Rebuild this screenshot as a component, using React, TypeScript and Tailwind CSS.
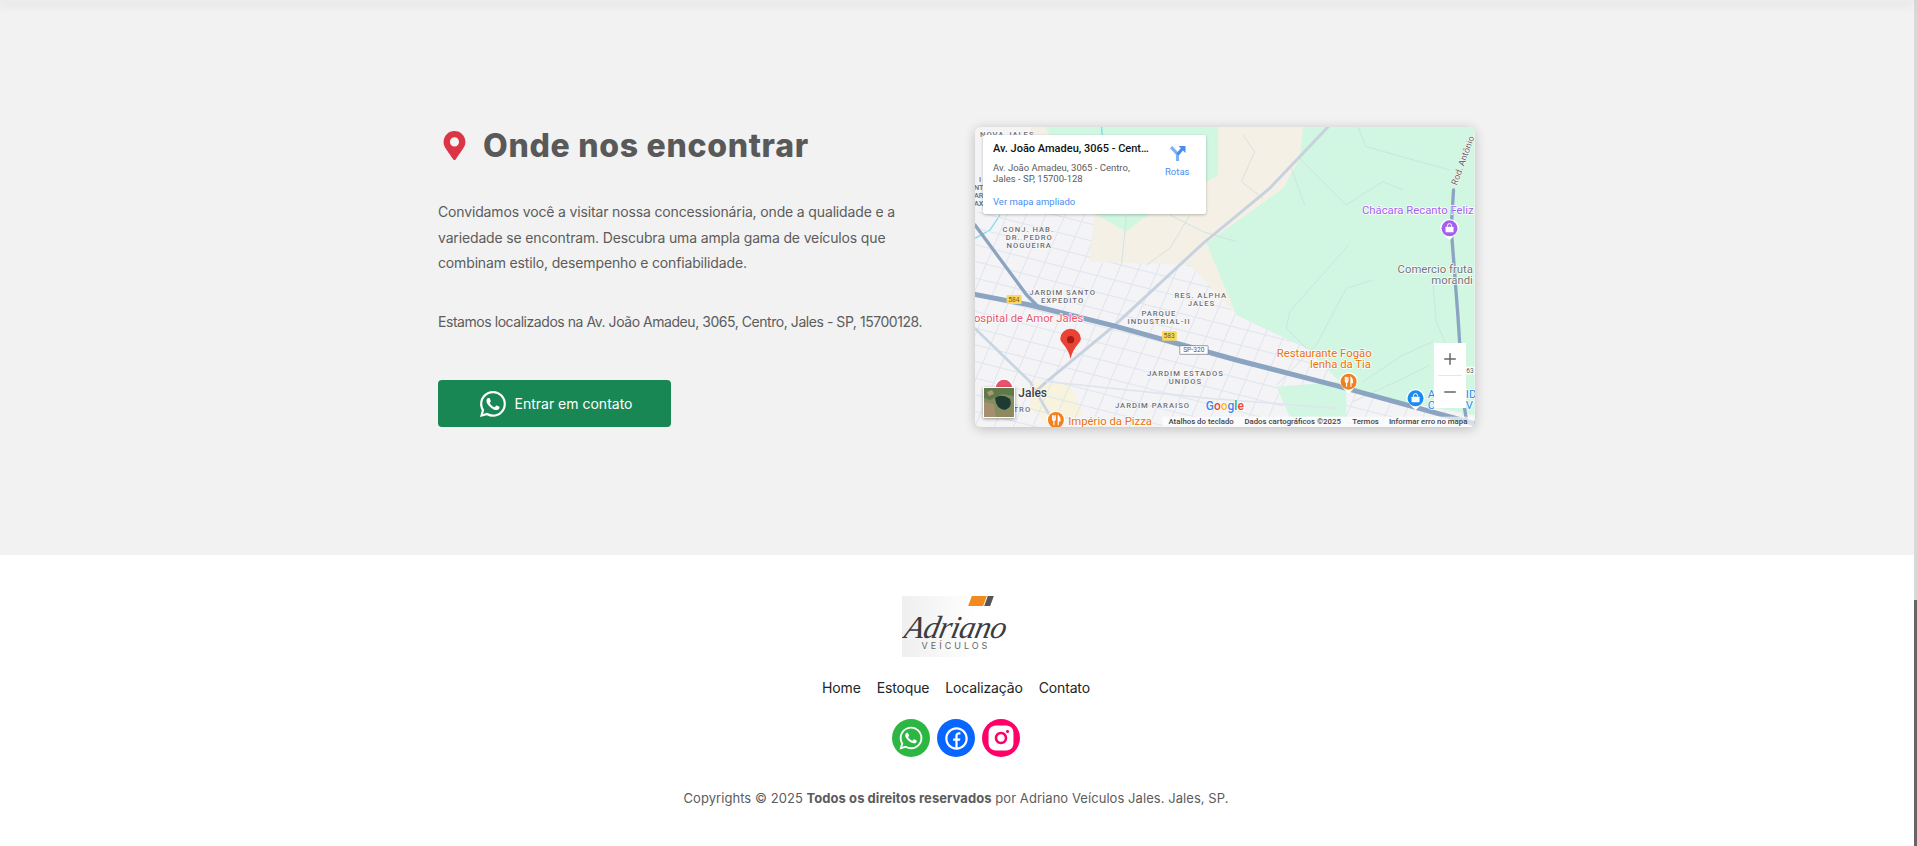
import React from "react";
import { FaMapMarkerAlt, FaWhatsapp } from "react-icons/fa";
import { BsWhatsapp } from "react-icons/bs";
import { RiFacebookCircleLine, RiInstagramFill } from "react-icons/ri";
import { Plus, Minus } from "lucide-react";

const navLinks = ["Home", "Estoque", "Localização", "Contato"];

// neighbourhood labels on the map: [text, x, y]
const areaLabels: [string, number, number][] = [
  ["NOVA JALES", 112, 66],
  ["CONJ. HAB.", 175, 352],
  ["DR. PEDRO", 178, 376],
  ["NOGUEIRA", 178, 400],
  ["JARDIM SANTO", 278, 539],
  ["EXPEDITO", 278, 563],
  ["RES. ALPHA", 693, 549],
  ["JALES", 695, 573],
  ["PARQUE", 567, 604],
  ["INDUSTRIAL-II", 568, 628],
  ["JARDIM ESTADOS", 647, 782],
  ["UNIDOS", 647, 806],
  ["JARDIM PARAISO", 548, 880],
];

// thin roads over green and beige land
const thinRoads = [
  "M820 60 L855 110 L815 200 L880 250",
  "M1165 36 L1190 95 L1440 165",
  "M990 130 L1130 270 L1240 200 L1300 225",
  "M965 160 L1005 270",
  "M1135 392 L960 590 L950 640 L1010 700",
  "M1210 495 L1130 520 L1040 690 L920 810",
  "M1390 500 L1400 620 L1430 690",
  "M1180 800 L1300 720 L1390 680",
  "M1150 860 L1280 800 L1380 750",
  "M600 300 L700 350 L800 380",
  "M470 300 L455 450",
  "M660 300 L600 400 L530 450",
];

function PoiPin({ x, y, color, children }: { x: number; y: number; color: string; children?: React.ReactNode }) {
  return (
    <g transform={`translate(${x} ${y})`}>
      <path d="M-28 0 A28 28 0 1 1 28 0 Q24 14 0 36 Q-24 14 -28 0 Z" fill="#fff" />
      <circle r="24" fill={color} />
      {children}
    </g>
  );
}

function ForkKnife() {
  return (
    <g stroke="#fff" strokeWidth="3.5" fill="none" strokeLinecap="round">
      <path d="M-10 -13 V-3 Q-10 2 -6 2 Q-2 2 -2 -3 V-13 M-6 -13 V14" />
      <path d="M7 14 V-13 Q13 -8 12 3 H7" fill="#fff" />
    </g>
  );
}

function LockBag() {
  return (
    <g>
      <rect x="-12" y="-5" width="24" height="17" rx="2" fill="#fff" />
      <path d="M-6 -5 V-9 Q-6 -14 0 -14 Q6 -14 6 -9 V-5" stroke="#fff" strokeWidth="3" fill="none" />
    </g>
  );
}

function MapDrawing() {
  return (
    <svg viewBox="15 36 1500 900" preserveAspectRatio="none" className="block w-full h-full font-['Roboto',sans-serif]">
      <defs>
        <clipPath id="urban">
          <path d="M15 290 H372 L360 440 L660 450 L800 600 L1010 700 L1110 800 L920 815 L960 936 H15 Z" />
          <path d="M1130 830 L1300 860 L1513 900 V936 H1130 Z" />
        </clipPath>
      </defs>

      <rect x="15" y="36" width="1500" height="900" fill="#f4f3f6" />
      {/* land */}
      <path d="M180 36 H1000 L990 130 L940 220 L710 385 L800 600 L660 450 L360 440 L372 290 L180 200 Z" fill="#f4f0e5" />
      <path d="M228 36 H745 V180 L520 310 L470 350 L372 295 L300 200 Z" fill="#d1f6e1" />
      <path d="M1000 36 H1515 V936 H1130 L1110 800 L1010 700 L800 600 L710 385 L940 220 L990 130 Z" fill="#d1f6e1" />
      <path d="M920 815 L1110 800 L1150 905 L960 905 Z" fill="#d1f6e1" />
      <path d="M1130 830 L1300 860 L1513 900 V936 H1130 Z" fill="#f4f3f6" />
      <path d="M190 800 L300 810 L340 900 L230 925 L180 880 Z" fill="#f8f3dd" />
      <path d="M395 36 L397 60" stroke="#7fdcec" strokeWidth="4" fill="none" />
      <path d="M15 370 L60 345 L90 300" stroke="#7fdcec" strokeWidth="4" fill="none" />

      {thinRoads.map((d) => (
        <path key={d} d={d} stroke="#cfdfe2" strokeWidth="2.5" fill="none" />
      ))}

      {/* street grid */}
      <g clipPath="url(#urban)" stroke="#dfe5ee" strokeWidth="3">
        {Array.from({ length: 20 }).map((_, i) => (
          <line key={`a${i}`} x1="-100" y1={210 + i * 50} x2="1600" y2={640 + i * 50} />
        ))}
        {Array.from({ length: 30 }).map((_, i) => (
          <line key={`b${i}`} x1={-160 + i * 58} y1="936" x2={120 + i * 58} y2="280" />
        ))}
      </g>

      {/* roads */}
      <g fill="none" strokeLinejoin="round" strokeLinecap="round">
        <path d="M1075 36 L900 220 L700 385 L430 635 L230 800 L180 845" stroke="#c8d2df" strokeWidth="9" />
        <path d="M15 640 L180 800 L260 936" stroke="#c8d5e2" strokeWidth="8" />
        <path d="M230 800 L720 850 L1100 880" stroke="#dfe5ee" strokeWidth="5" />
        <path d="M15 330 L170 540 L210 580" stroke="#8aa4c1" strokeWidth="10" />
        <path d="M15 538 L180 570 L430 632 L800 735 L1100 812 L1513 925" stroke="#8aa4c1" strokeWidth="15" />
        <path d="M1452 225 L1445 340 L1465 600 L1482 860 L1490 910" stroke="#8aa4c1" strokeWidth="10" />
      </g>

      {/* shields */}
      <rect x="110" y="540" width="45" height="27" rx="3" fill="#fbd75b" />
      <text x="132" y="560" fontSize="20" fill="#6d5f2a" textAnchor="middle">584</text>
      <rect x="577" y="649" width="44" height="28" rx="3" fill="#fbd75b" />
      <text x="598" y="670" fontSize="20" fill="#6d5f2a" textAnchor="middle">583</text>
      <rect x="630" y="692" width="85" height="26" rx="2" fill="#fff" stroke="#6b6f76" strokeWidth="2" />
      <text x="672" y="711" fontSize="20" fill="#55595f" textAnchor="middle">SP-320</text>
      <rect x="1488" y="755" width="27" height="23" fill="#fff" />
      <text x="1490" y="773" fontSize="20" fill="#55595f">63</text>

      {/* labels */}
      <g fontSize="23" fontWeight="500" letterSpacing="3" fill="#696d74" textAnchor="middle" stroke="#fff" strokeWidth="3" paintOrder="stroke">
        {areaLabels.map(([label, x, y]) => (
          <text key={label + y} x={x} y={y}>{label}</text>
        ))}
        <text x="157" y="890">TRO</text>
      </g>
      <g fontSize="22" fill="#696d74" fontWeight="500">
        <text x="30" y="202" textAnchor="middle">I</text>
        <text x="26" y="226" textAnchor="middle">NT</text>
        <text x="26" y="250" textAnchor="middle">AR</text>
        <text x="26" y="274" textAnchor="middle">AX</text>
      </g>
      <g fontSize="34" stroke="#fff" strokeWidth="4" paintOrder="stroke">
        <text x="340" y="620" textAnchor="end" fill="#e8546c">Hospital de Amor Jales</text>
        <text x="1206" y="726" textAnchor="end" fill="#e8710a">Restaurante Fogão</text>
        <text x="1204" y="760" textAnchor="end" fill="#e8710a">lenha da Tia</text>
        <text x="295" y="930" fill="#e8710a">Império da Pizza</text>
        <text x="1177" y="298" fill="#a55ff0">Chácara Recanto Feliz</text>
        <text x="1510" y="474" textAnchor="end" fill="#70757a">Comercio fruta</text>
        <text x="1510" y="507" textAnchor="end" fill="#70757a">morandi</text>
        <text x="1375" y="848" fill="#1a8cf0">A</text>
        <text x="1489" y="848" fill="#1a8cf0">ID</text>
        <text x="1375" y="882" fill="#1a8cf0">C</text>
        <text x="1489" y="882" fill="#1a8cf0">V</text>
      </g>
      <text x="145" y="846" fontSize="36" fontWeight="500" fill="#3c4043" stroke="#fff" strokeWidth="4" paintOrder="stroke">Jales</text>
      <text transform="translate(1462 212) rotate(-70)" fontSize="27" fill="#5f6368" stroke="#fff" strokeWidth="3" paintOrder="stroke">Rod. Antônio</text>

      {/* points of interest */}
      <PoiPin x={1440} y={340} color="#a55ff0"><LockBag /></PoiPin>
      <PoiPin x={1137} y={800} color="#f2801c"><ForkKnife /></PoiPin>
      <PoiPin x={258} y={915} color="#f2801c"><ForkKnife /></PoiPin>
      <PoiPin x={1338} y={850} color="#1a8cf0"><LockBag /></PoiPin>
      <PoiPin x={102} y={818} color="#e8546c" />

      {/* marker */}
      <path d="M302 732 Q296 705 280 688 Q271 678 271 672 A31 31 0 1 1 333 672 Q333 678 324 688 Q308 705 302 732 Z" fill="#ea4335" />
      <circle cx="302" cy="674" r="11" fill="#a61b14" />

      {/* google logo */}
      <text x="708" y="885" fontSize="36" fontWeight="500" stroke="#fff" strokeWidth="3" paintOrder="stroke">
        <tspan fill="#4285f4">G</tspan>
        <tspan fill="#ea4335">o</tspan>
        <tspan fill="#fbbc05">o</tspan>
        <tspan fill="#4285f4">g</tspan>
        <tspan fill="#34a853">l</tspan>
        <tspan fill="#ea4335">e</tspan>
      </text>

      {/* attribution */}
      <rect x="578" y="905" width="937" height="31" fill="#fff" fillOpacity="0.65" />
      <g fontSize="23.5" fontWeight="500" fill="#444">
        <text x="596" y="927">Atalhos do teclado</text>
        <text x="824" y="927">Dados cartográficos ©2025</text>
        <text x="1148" y="927">Termos</text>
        <text x="1258" y="927">Informar erro no mapa</text>
      </g>
    </svg>
  );
}

function MapEmbed() {
  return (
    <div className="relative w-[499.5px] h-[300px] rounded-md overflow-hidden shadow-[0_2px_12px_rgba(0,0,0,0.22)] font-['Roboto',sans-serif]">
      <MapDrawing />

      {/* place card */}
      <div className="absolute left-2 top-2 w-[223px] h-[79px] bg-white rounded-[2px] shadow-[0_1px_3px_rgba(0,0,0,0.25)] flex pl-[10px] pt-[7px]">
        <div className="w-[160px]">
          <div className="w-[158px] text-[11px] leading-[14px] font-medium text-[#111] truncate">
            Av. João Amadeu, 3065 - Centro, Jales
          </div>
          <div className="mt-[6px] text-[9.5px] leading-[11px] text-[#5b5b5b]">
            Av. João Amadeu, 3065 - Centro,
            <br />
            Jales - SP, 15700-128
          </div>
          <div className="mt-[12px] text-[9.5px] leading-[11px] text-[#4a8df0]">Ver mapa ampliado</div>
        </div>
        <div className="ml-[12px] flex flex-col items-center pt-[3px]">
          <svg viewBox="0 0 16 16" className="w-[17px] h-[17px]">
            <path d="M2 2 L8 8.5 V15" stroke="#7fb0f5" strokeWidth="3" fill="none" />
            <path d="M8 9 L13 3" stroke="#4a8df0" strokeWidth="3" fill="none" />
            <path d="M9 1 H15.5 V7.5 Z" fill="#4a8df0" />
          </svg>
          <div className="mt-[4px] text-[9.5px] leading-[11px] text-[#4a8df0]">Rotas</div>
        </div>
      </div>

      {/* zoom buttons */}
      <div className="absolute left-[459px] top-[216px] w-8 h-[65px] bg-white flex flex-col items-center text-[#666]">
        <div className="h-8 flex items-center justify-center">
          <Plus size={18} strokeWidth={2} />
        </div>
        <div className="w-6 h-px bg-[#e6e6e6]" />
        <div className="h-8 flex items-center justify-center">
          <Minus size={18} strokeWidth={2} />
        </div>
      </div>

      {/* satellite thumbnail */}
      <div className="absolute left-2 top-[260px] w-[32px] h-[31px] border border-white shadow-[0_1px_3px_rgba(0,0,0,0.4)]">
        <svg viewBox="0 0 30 29" className="block w-full h-full">
          <rect width="30" height="29" fill="#7f8f5f" />
          <path d="M0 0 H30 V8 L18 6 L6 12 L0 10 Z" fill="#5f7a48" />
          <path d="M0 14 L10 16 L12 29 H0 Z" fill="#a58f6c" />
          <path d="M12 22 L30 18 V29 H14 Z" fill="#8d8a5f" />
          <path d="M3 4 L8 2 L10 6 L5 8 Z" fill="#a89a78" />
          <path d="M11 10 Q18 5 26 11 Q29 19 21 22 Q12 21 11 10 Z" fill="#1f3a34" />
        </svg>
      </div>
    </div>
  );
}

function Logo() {
  return (
    <div className="relative w-[108px] h-[61px] bg-gradient-to-r from-[#efefef] to-white to-70% overflow-hidden">
      <div className="absolute left-[68px] top-0 w-[15px] h-[10px] bg-[#f28a1e] -skew-x-[20deg]" />
      <div className="absolute left-[84px] top-0 w-[6px] h-[10px] bg-[#555] -skew-x-[20deg]" />
      <div className="absolute left-0 right-0 top-[15px] text-center font-['Liberation_Serif',serif] italic text-[32px] leading-[32px] tracking-[-0.5px] text-[#3d3d3d] -skew-x-12">
        Adriano
      </div>
      <div className="absolute left-0 right-0 top-[45px] text-center text-[9px] leading-[10px] tracking-[3px] text-[#666]">
        VEÍCULOS
      </div>
    </div>
  );
}

export default function App() {
  return (
    <div className="flex h-[846px] overflow-hidden bg-white font-['Inter',sans-serif]">
      <div className="flex-1 flex flex-col min-w-0">
        <div className="relative z-10 h-[2px] bg-[#ececec] shadow-[0_2px_10px_rgba(0,0,0,0.18)]" />

        <section className="h-[553px] bg-[#f2f2f2] pt-[125px]">
          <div className="ml-[438px] w-[1036.5px] flex justify-between">
            <div className="w-[500px]">
              <div className="flex items-center pt-[4px] pl-[2px] pb-px">
                <FaMapMarkerAlt className="text-[#dc3545] text-[29px]" />
                <h2 className="ml-[14px] text-[32px] leading-[28px] font-extrabold text-[#595959] tracking-[0.7px]">
                  Onde nos encontrar
                </h2>
              </div>
              <p className="mt-[38px] text-[14px] leading-[25.6px] text-[#5c5c5c] tracking-[-0.15px]">
                Convidamos você a visitar nossa concessionária, onde a qualidade e a variedade se encontram. Descubra uma ampla gama de veículos que combinam estilo, desempenho e confiabilidade.
              </p>
              <p className="mt-[33px] text-[14px] leading-[25.6px] text-[#5c5c5c] tracking-[-0.45px] whitespace-nowrap">
                Estamos localizados na Av. João Amadeu, 3065, Centro, Jales - SP, 15700128.
              </p>
              <button className="mt-[46px] w-[233px] h-[47px] rounded bg-[#198754] text-white flex items-center justify-center gap-[9px] pl-[3px] text-[14px]">
                <BsWhatsapp className="text-[26px]" />
                Entrar em contato
              </button>
            </div>
            <MapEmbed />
          </div>
        </section>

        <footer className="flex-1 bg-white flex flex-col items-center pt-[41px] pr-[2px]">
          <Logo />
          <nav className="mt-[20px] flex gap-4 text-[14px] leading-[21px] text-[#212529] tracking-[-0.15px]">
            {navLinks.map((link) => (
              <a key={link}>{link}</a>
            ))}
          </nav>
          <div className="mt-[21px] flex gap-[7px] text-white">
            <a className="w-[38px] h-[38px] rounded-full bg-[#2bb741] flex items-center justify-center">
              <FaWhatsapp className="text-[26px]" />
            </a>
            <a className="w-[38px] h-[38px] rounded-full bg-[#0866ff] flex items-center justify-center">
              <RiFacebookCircleLine className="text-[27px]" />
            </a>
            <a className="w-[38px] h-[38px] rounded-full bg-[#ff0069] flex items-center justify-center">
              <RiInstagramFill className="text-[30px]" />
            </a>
          </div>
          <p className="mt-[31px] text-[13px] leading-[21px] text-[#5c5c5c] tracking-[0.06px]">
            Copyrights © 2025 <b className="font-bold">Todos os direitos reservados</b> por Adriano Veículos Jales. Jales, SP.
          </p>
        </footer>
      </div>

      {/* page scrollbar */}
      <div className="w-[3px] flex flex-col">
        <div className="flex-1 bg-[#dcd8da]" />
        <div className="h-[246px] bg-[#6b6366]" />
      </div>
    </div>
  );
}
